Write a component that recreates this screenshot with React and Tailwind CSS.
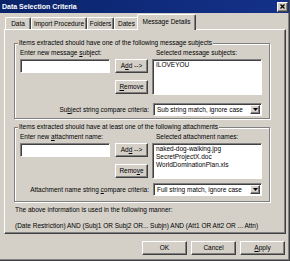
import React from 'react';

const Raised = ({ className = '', children }) => (
    <div className={`flex items-center justify-center bg-[#d4d0c8] border border-t-white border-l-white border-r-[#404040] border-b-[#404040] shadow-[inset_-1px_-1px_0_#808080] ${className}`}>
        {children}
    </div>
);

const Sunken = ({ className = '', children }) => (
    <div className={`bg-white border border-t-[#808080] border-l-[#808080] border-r-white border-b-white shadow-[inset_1px_1px_0_#404040] ${className}`}>
        {children}
    </div>
);

const Combo = ({ value }) => (
    <Sunken className="ml-[4px] w-[109px] h-[13px] flex items-center justify-between pl-[3px] pr-[1px]">
        <span>{value}</span>
        <Raised className="w-[10px] h-[9px]">
            <svg width="5" height="3" viewBox="0 0 5 3">
                <path d="M0 0h5L2.5 3z" fill="#000" />
            </svg>
        </Raised>
    </Sunken>
);

const Group = ({ title, inputLabel, listLabel, items, compareLabel, compareValue, addKey, removeLabel, comboGap, bottomPad, className = '' }) => (
    <div className={`flex flex-col border border-[#808080] shadow-[inset_1px_1px_0_#fff,1px_1px_0_#fff] pl-[5px] ${bottomPad} ${className}`}>
        <span className="-mt-[5px] -ml-[2px] px-[1px] self-start bg-[#d4d0c8] h-[8px]">{title}</span>

        {/* input / buttons / list */}
        <div className="flex items-start mt-[2px]">
            <div className="w-[90px] flex flex-col">
                <span className="h-[8px] whitespace-nowrap">{inputLabel}</span>
                <Sunken className="mt-[2px] h-[14px]" />
            </div>
            <div className="ml-[5px] w-[33px] flex flex-col pt-[10px]">
                <Raised className="h-[14px]">{addKey}</Raised>
                <Raised className="mt-[7px] h-[14px]">{removeLabel}</Raised>
            </div>
            <div className="ml-[4px] w-[110px] flex flex-col">
                <span className="h-[8px] pl-[4px] whitespace-nowrap">{listLabel}</span>
                <Sunken className="mt-[2px] h-[36px] pl-[3px] pt-[1px] flex flex-col">
                    {items.map((item) => (
                        <span key={item} className="h-[8px]">{item}</span>
                    ))}
                </Sunken>
            </div>
        </div>

        {/* compare criteria */}
        <div className={`flex items-center ${comboGap}`}>
            <span className="w-[129px] text-right whitespace-nowrap">{compareLabel}</span>
            <Combo value={compareValue} />
        </div>
    </div>
);

const tabs = [
    { label: 'Data', w: 'w-[26px]' },
    { label: 'Import Procedure', w: 'w-[56px]' },
    { label: 'Folders', w: 'w-[27px]' },
    { label: 'Dates', w: 'w-[25px]' },
];

export default function App() {
    return (
        <div className="w-[290px] h-[261px] bg-[#d4d0c8] text-black text-[6.5px] leading-[8px] font-['Liberation_Sans',Arial,sans-serif] flex flex-col overflow-hidden border-r border-b border-r-[#404040] border-b-[#404040] shadow-[inset_-1px_-1px_0_#808080]">
            {/* Title bar */}
            <div className="h-[13px] flex items-center justify-between pl-[2px] pr-[1px] bg-linear-to-r from-[#0a246a] to-[#14318a]">
                <span className="text-[7px] font-bold text-white">Data Selection Criteria</span>
                <Raised className="w-[11px] h-[10px]">
                    <svg width="5" height="5" viewBox="0 0 5 5">
                        <path d="M0.5 0.5L4.5 4.5M4.5 0.5L0.5 4.5" stroke="#000" strokeWidth="1.3" />
                    </svg>
                </Raised>
            </div>

            {/* Tabs */}
            <div className="mt-[1px] h-[15px] flex items-end pl-[5px]">
                {tabs.map((t) => (
                    <div
                        key={t.label}
                        className={`${t.w} h-[12px] flex items-center justify-center whitespace-nowrap rounded-t-[2px] border-t border-l border-r border-t-white border-l-white border-r-[#404040] shadow-[inset_-1px_0_0_#808080]`}
                    >
                        {t.label}
                    </div>
                ))}
                <div className="relative z-10 -ml-[2px] -mb-[1px] w-[59px] h-[16px] flex items-center justify-center whitespace-nowrap bg-[#d4d0c8] rounded-t-[2px] border-t border-l border-r border-t-white border-l-white border-r-[#404040] shadow-[inset_-1px_0_0_#808080] pb-[1px]">
                    Message Details
                </div>
            </div>

            {/* Panel */}
            <div className="ml-[4px] w-[282px] h-[205px] flex flex-col border border-t-white border-l-white border-r-[#404040] border-b-[#404040] shadow-[inset_-1px_-1px_0_#808080]">
                <Group
                    className="mt-[13px] ml-[9px] w-[256px]"
                    title="Items extracted should have one of the following message subjects"
                    inputLabel={<>Enter new message <span className="underline">s</span>ubject:</>}
                    listLabel="Selected message subjects:"
                    items={['ILOVEYOU']}
                    compareLabel={<>Su<span className="underline">b</span>ject string compare criteria:</>}
                    compareValue="Sub string match, ignore case"
                    addKey={<span>A<span className="underline">d</span>d --&gt;</span>}
                    removeLabel={<span><span className="underline">R</span>emove</span>}
                    comboGap="mt-[8px]"
                    bottomPad="pb-[2px]"
                />
                <Group
                    className="mt-[8px] ml-[9px] w-[256px]"
                    title="Items extracted should have at least one of the following attachments"
                    inputLabel={<>Enter new <span className="underline">a</span>ttachment name:</>}
                    listLabel="Selected attachment names:"
                    items={['naked-dog-walking.jpg', 'SecretProjectX.doc', 'WorldDominationPlan.xls']}
                    compareLabel={<>Attachment name string <span className="underline">c</span>ompare criteria:</>}
                    compareValue="Full string match, ignore case"
                    addKey={<span>Ad<span className="underline">d</span> --&gt;</span>}
                    removeLabel={<span>Remo<span className="underline">v</span>e</span>}
                    comboGap="mt-[4px]"
                    bottomPad="pb-[5px]"
                />

                <p className="mt-[4px] ml-[10px] h-[8px]">The above information is used in the following manner:</p>
                <p className="mt-[8px] ml-[10px] h-[8px] whitespace-nowrap">
                    (Date Restriction) AND (Subj1 OR Subj2 OR... Subjn) AND (Att1 OR Att2 OR ... Attn)
                </p>
            </div>

            {/* Dialog buttons */}
            <div className="mt-[7px] flex justify-end gap-[4px] pr-[4px]">
                <Raised className="w-[45px] h-[14px]">OK</Raised>
                <Raised className="w-[45px] h-[14px]">Cancel</Raised>
                <Raised className="w-[45px] h-[14px]"><span><span className="underline">A</span>pply</span></Raised>
            </div>
        </div>
    );
}
